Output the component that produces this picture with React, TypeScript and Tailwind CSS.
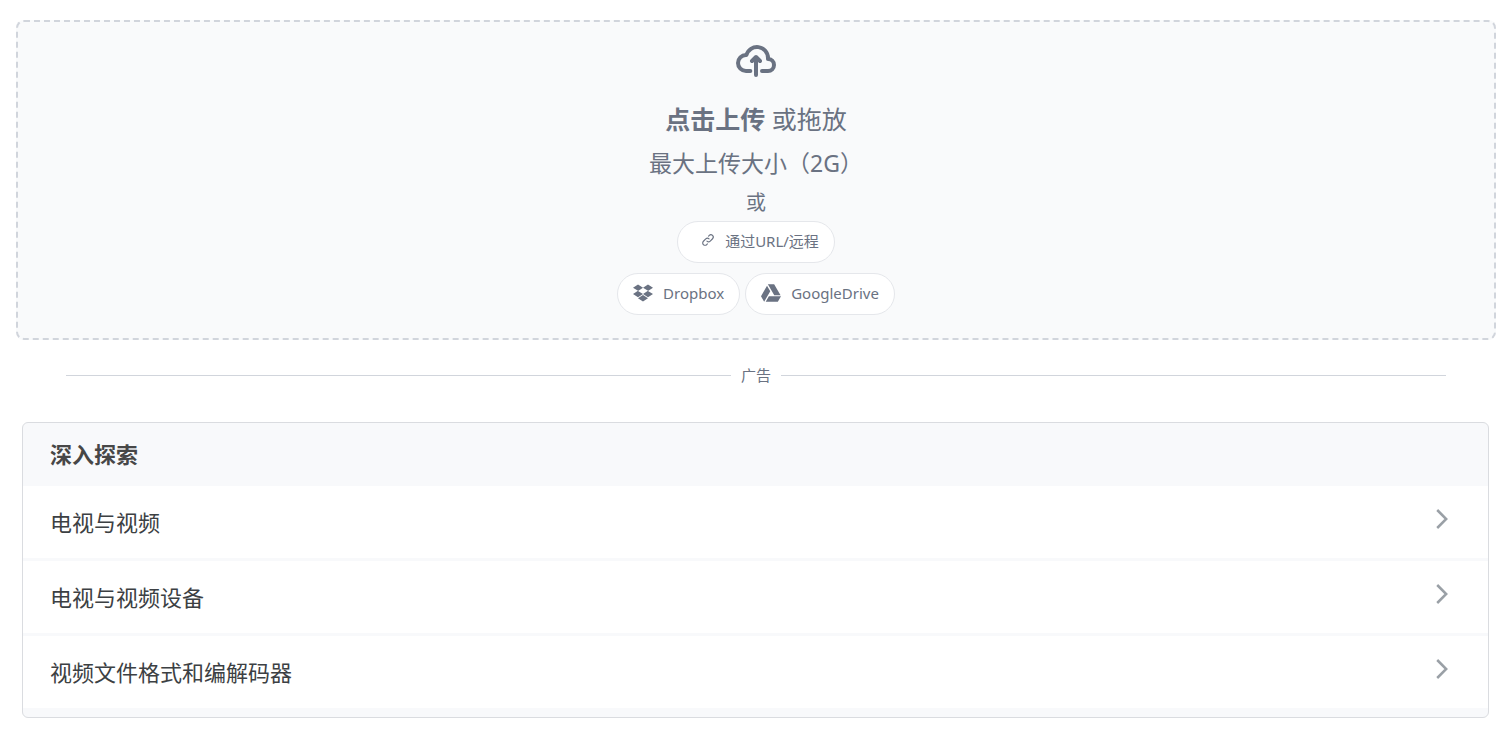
import { FaDropbox, FaGoogleDrive } from "react-icons/fa";

const topics = ["电视与视频", "电视与视频设备", "视频文件格式和编解码器"];

function CloudUploadIcon() {
  return (
    <svg className="h-8 w-10" viewBox="0 0 20 16" fill="none" aria-hidden="true">
      <path
        stroke="currentColor"
        strokeLinecap="round"
        strokeLinejoin="round"
        strokeWidth="2"
        d="M13 13h3a3 3 0 0 0 0-6h-.025A5.56 5.56 0 0 0 16 6.5 5.5 5.5 0 0 0 5.207 5.021C5.137 5.017 5.071 5 5 5a4 4 0 0 0 0 8h2.167M10 15V6m0 0L8 8m2-2 2 2"
      />
    </svg>
  );
}

function LinkIcon() {
  return (
    <svg className="mb-0.5 size-3.5" viewBox="0 0 24 24" fill="none" stroke="currentColor" strokeWidth="2" strokeLinecap="round" strokeLinejoin="round" aria-hidden="true">
      <path d="M13.828 10.172a4 4 0 0 0-5.656 0l-4 4a4 4 0 1 0 5.656 5.656l1.102-1.101m-.758-4.899a4 4 0 0 0 5.656 0l4-4a4 4 0 0 0-5.656-5.656l-1.1 1.1" />
    </svg>
  );
}

function ChevronIcon() {
  return (
    <svg className="mb-1.5 h-5 w-3 text-[#9aa0a6]" viewBox="0 0 12 20" fill="none" stroke="currentColor" strokeWidth="2.5" aria-hidden="true">
      <path d="M1.2 1 10.2 10l-9 9" />
    </svg>
  );
}

const pill = "flex h-[42px] items-center rounded-full border border-gray-200 bg-white pb-0.5 text-[15px]";

export default function App() {
  return (
    <main className="pt-5 pr-3.5 pb-5 pl-4 font-['Noto_Sans','Noto_Sans_CJK_SC',sans-serif] text-gray-500">
      <section className="flex flex-col items-center rounded-lg border-2 border-dashed border-gray-300 bg-gray-50 py-[23px]">
        <CloudUploadIcon />
        <p className="mt-6 text-[25px] leading-9">
          <span className="font-bold">点击上传</span> 或拖放
        </p>
        <p className="mt-2 text-[23px] leading-9">最大上传大小（2G）</p>
        <p className="mt-1 text-[20px] leading-9">或</p>
        <button type="button" className={`${pill} gap-2.5 pr-[15px] pl-[23px]`}>
          <LinkIcon />
          通过URL/远程
        </button>
        <div className="mt-2.5 flex gap-[5px]">
          <button type="button" className={`${pill} gap-2.5 px-[15px]`}>
            <FaDropbox className="size-5" aria-hidden="true" />
            Dropbox
          </button>
          <button type="button" className={`${pill} gap-2.5 px-[15px]`}>
            <FaGoogleDrive className="size-5" aria-hidden="true" />
            GoogleDrive
          </button>
        </div>
      </section>

      <div className="mt-[23px] flex items-center gap-2.5 px-[50px] text-[15px] leading-6">
        <span className="h-px flex-1 bg-gray-300" />
        广告
        <span className="h-px flex-1 bg-gray-300" />
      </div>

      <section className="mt-[35px] mr-[7px] ml-1.5 overflow-hidden rounded-md border border-[#dadce0] bg-[#f8f9fb] pb-[9px] text-[22px] leading-8 text-[#3c4043]">
        <h2 className="px-[27px] pt-[15px] pb-4 font-bold text-[#474747]">深入探索</h2>
        <ul className="flex flex-col gap-[3px]">
          {topics.map((topic) => (
            <li key={topic}>
              <a href="#" className="flex h-[72px] items-center justify-between bg-white pr-10 pl-[27px]">
                {topic}
                <ChevronIcon />
              </a>
            </li>
          ))}
        </ul>
      </section>
    </main>
  );
}
